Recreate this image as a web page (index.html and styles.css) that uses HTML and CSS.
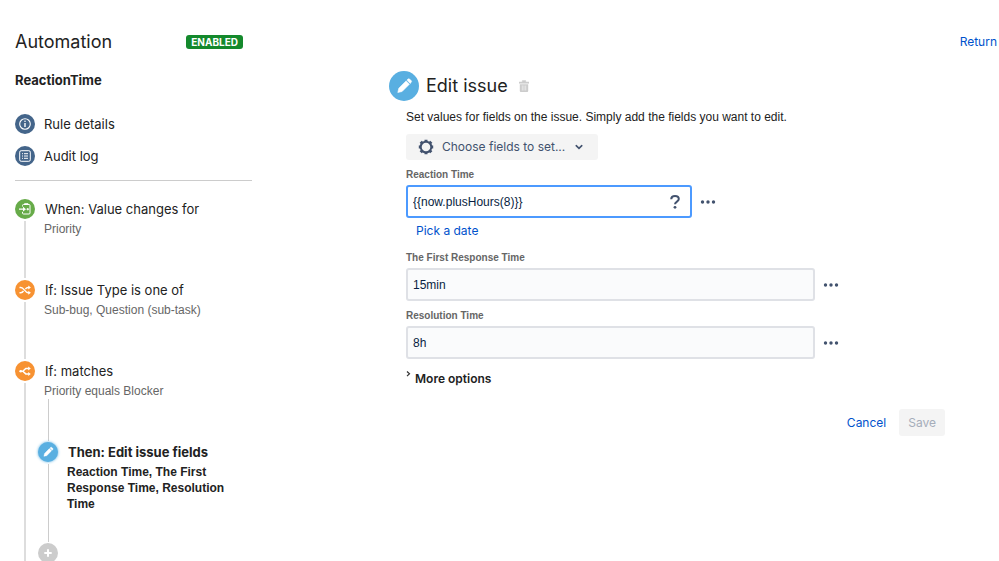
FILE: index.html
```html
<!DOCTYPE html>
<html lang="en">
<head>
<meta charset="utf-8">
<title>Automation</title>
<link rel="stylesheet" href="styles.css">
</head>
<body>
<svg class="defs" aria-hidden="true">
  <symbol id="pencil" viewBox="0 0 30 30">
    <path fill="#fff" stroke="#fff" stroke-width=".6" stroke-linejoin="round" d="M9.800 17.200l7.300-7.300 3.300 3.300-7.300 7.300-4.300 1zM17.900 9.100l.9-.9a1.400 1.400 0 0 1 2 0l1.300 1.300a1.400 1.400 0 0 1 0 2l-.9.900z"/>
  </symbol>
</svg>
<div class="page">
  <aside class="sidebar">
    <header class="brand">
      <h1>Automation</h1>
      <span class="badge">ENABLED</span>
    </header>
    <h2 class="rule-name">ReactionTime</h2>
    <nav class="rule-nav">
      <a href="#details">
        <svg class="dot navy" viewBox="0 0 20 20"><circle cx="10" cy="10" r="5.300" fill="none" stroke="#fff" stroke-width="1.100"/><path d="M10 9v4" stroke="#fff" stroke-width="1.400"/><circle cx="10" cy="7.300" r=".8" fill="#fff"/></svg>
        Rule details
      </a>
      <a href="#audit">
        <svg class="dot navy" viewBox="0 0 20 20"><rect x="4.700" y="4.700" width="10.600" height="10.600" rx="1.500" fill="none" stroke="#fff"/><path d="M7 7.700h1M9 7.700h4M7 10h1M9 10h4M7 12.300h1M9 12.300h4" stroke="#fff"/></svg>
        Audit log
      </a>
    </nav>
    <ol class="steps">
      <li class="step">
        <div class="rail">
          <svg class="dot green" viewBox="0 0 20 20"><path d="M7.500 7.500v-1a1 1 0 0 1 1-1h5.500a1 1 0 0 1 1 1V14a1 1 0 0 1-1 1H8.500a1 1 0 0 1-1-1v-1.200M9.500 5.500V4.700h3.500v.8" fill="none" stroke="#fff"/><path d="M4 10.200h5" stroke="#fff" stroke-width="1.300"/><path d="M8 7.800l3 2.400-3 2.400z" fill="#fff"/><path d="M11.500 10.200h2.500M12.750 9v2.400" stroke="#fff"/></svg>
        </div>
        <div class="step-body">
          <h3>When: Value changes for</h3>
          <p>Priority</p>
        </div>
      </li>
      <li class="step">
        <div class="rail">
          <svg class="dot orange" viewBox="0 0 20 20"><path d="M4.500 7.500h1.300c3.200 0 4.200 5.200 7.400 5.200h.8M4.500 12.700h1.300c1.200 0 2.100-.8 2.700-1.700M10.400 9.200c.7-1 1.500-1.700 2.800-1.700h.8" fill="none" stroke="#fff" stroke-width="1.400"/><path d="M13.300 5.500l2.600 2-2.600 2zM13.300 10.700l2.600 2-2.600 2z" fill="#fff"/></svg>
        </div>
        <div class="step-body">
          <h3>If: Issue Type is one of</h3>
          <p>Sub-bug, Question (sub-task)</p>
        </div>
      </li>
      <li class="step">
        <div class="rail">
          <svg class="dot orange" viewBox="0 0 20 20"><path d="M4.500 10.200h3.300l3-2.700h3M7.800 10.200l3 2.700h3" fill="none" stroke="#fff" stroke-width="1.500"/><circle cx="5.800" cy="10.200" r="1.200" fill="#fff"/><path d="M13.200 5.500l2.600 2-2.600 2zM13.200 10.900l2.600 2-2.600 2z" fill="#fff"/></svg>
        </div>
        <div class="step-body">
          <h3>If: matches</h3>
          <p>Priority equals Blocker</p>
          <ol class="steps nested">
            <li class="step current">
              <div class="rail">
                <svg class="dot blue"><use href="#pencil"/></svg>
              </div>
              <div class="step-body">
                <h3>Then: Edit issue fields</h3>
                <p>Reaction Time, The First Response Time, Resolution Time</p>
              </div>
            </li>
          </ol>
          <button class="add" type="button" aria-label="Add component"><svg viewBox="0 0 20 20"><path d="M10 6.300v7.400M6.300 10h7.400" stroke="#fff" stroke-width="2"/></svg></button>
        </div>
      </li>
    </ol>
  </aside>

  <main class="main">
    <div class="topbar"><a href="#return">Return</a></div>
    <form class="editor">
      <header class="editor-head">
        <svg class="dot large blue"><use href="#pencil"/></svg>
        <h2>Edit issue</h2>
        <button class="icon-button" type="button" aria-label="Delete"><svg class="trash" viewBox="0 0 10 12"><path d="M0 2h10v1.300H0zM3.300 2V.6h3.400V2" fill="#ccc" stroke="#ccc" stroke-width=".5"/><path d="M.8 4.200h8.400V11a1 1 0 0 1-1 1H1.800a1 1 0 0 1-1-1z" fill="#ccc"/><path d="M3.300 5.500v5M5 5.500v5M6.700 5.500v5" stroke="#eee" stroke-width=".8"/></svg></button>
      </header>
      <div class="editor-body">
        <p class="intro">Set values for fields on the issue. Simply add the fields you want to edit.</p>
        <button class="choose" type="button">
          <svg class="gear" viewBox="0 0 16 16"><circle cx="8" cy="8" r="5.300" fill="none" stroke="#42526e" stroke-width="2"/><g stroke="#42526e" stroke-width="3"><path d="M8 .8v2M8 13.200v2M.8 8h2M13.200 8h2M2.700 2.700l1.400 1.400M11.900 11.900l1.400 1.400M2.700 13.300l1.400-1.400M11.900 4.100l1.400-1.400"/></g></svg>
          Choose fields to set...
          <svg class="chevron" viewBox="0 0 8 8"><path d="M1.200 2.700L4 5.400l2.800-2.700" fill="none" stroke="#42526e" stroke-width="1.600" stroke-linecap="round"/></svg>
        </button>

        <div class="field">
          <label for="reaction">Reaction Time</label>
          <div class="row short">
            <div class="box focused">
              <input id="reaction" type="text" value="{{now.plusHours(8)}}">
              <button class="help" type="button" aria-label="Help"><svg viewBox="0 0 10 14"><path d="M1.200 4.200C1.300 2.200 2.800 1 5 1s3.800 1.200 3.800 3.100C8.800 6.700 5 6.500 5 9.300" fill="none" stroke="#42526e" stroke-width="2"/><circle cx="5" cy="12.300" r="1.400" fill="#42526e"/></svg></button>
            </div>
            <button class="more" type="button" aria-label="More"><svg viewBox="0 0 16 4"><g fill="#42526e"><circle cx="2.500" cy="2" r="1.700"/><circle cx="8" cy="2" r="1.700"/><circle cx="13.500" cy="2" r="1.700"/></g></svg></button>
          </div>
          <a class="pick" href="#date">Pick a date</a>
        </div>

        <div class="field">
          <label for="first">The First Response Time</label>
          <div class="row">
            <div class="box"><input id="first" type="text" value="15min"></div>
            <button class="more" type="button" aria-label="More"><svg viewBox="0 0 16 4"><g fill="#42526e"><circle cx="2.500" cy="2" r="1.700"/><circle cx="8" cy="2" r="1.700"/><circle cx="13.500" cy="2" r="1.700"/></g></svg></button>
          </div>
        </div>

        <div class="field">
          <label for="resolution">Resolution Time</label>
          <div class="row">
            <div class="box"><input id="resolution" type="text" value="8h"></div>
            <button class="more" type="button" aria-label="More"><svg viewBox="0 0 16 4"><g fill="#42526e"><circle cx="2.500" cy="2" r="1.700"/><circle cx="8" cy="2" r="1.700"/><circle cx="13.500" cy="2" r="1.700"/></g></svg></button>
          </div>
        </div>

        <button class="options" type="button"><svg viewBox="0 0 5 8"><path d="M1 .5l2.500 2.300L1 5.100" fill="none" stroke="#333" stroke-width="1.200"/></svg>More options</button>

        <div class="actions">
          <a href="#cancel">Cancel</a>
          <button class="save" type="submit" disabled>Save</button>
        </div>
      </div>
    </form>
  </main>
</div>
</body>
</html>
```
FILE: styles.css
```css
* { box-sizing: border-box; }
body {
  margin: 0;
  height: 100vh;
  overflow: hidden;
  background: #fff;
  color: #222;
  font: 13px/16px "Inter", sans-serif;
}
h1, h2, h3, p, ol { margin: 0; padding: 0; }
ol { list-style: none; }
a { color: #0052cc; text-decoration: none; }
button {
  border: 0;
  padding: 0;
  background: none;
  color: inherit;
  font: inherit;
}
svg { display: block; flex: none; }
.defs { position: absolute; width: 0; height: 0; }

.page {
  display: grid;
  grid-template-columns: 252px 1fr;
  min-height: 100vh;
}
.sidebar {
  display: flex;
  flex-direction: column;
  padding: 30px 0 0 15px;
}
.brand {
  display: flex;
  align-items: center;
  justify-content: space-between;
  padding-right: 9px;
}
h1 { font-size: 18px; line-height: 24px; font-weight: 400; }
.badge {
  padding: 0 5px;
  border-radius: 3px;
  background: #14892c;
  color: #fff;
  font: bold 10px/14px "Inter", sans-serif;
}
.rule-name {
  margin-top: 18px;
  font-size: 13px;
  line-height: 16px;
  font-weight: 700;
}
.rule-nav {
  display: flex;
  flex-direction: column;
  gap: 12px;
  margin-top: 26px;
  padding-bottom: 14px;
  border-bottom: 1px solid #ccc;
}
.rule-nav a {
  display: flex;
  align-items: center;
  gap: 9px;
  color: #222;
}

.dot { width: 20px; height: 20px; border-radius: 50%; }
.dot.large { width: 30px; height: 30px; }
.navy { background: #44658a; }
.green { background: #67ab49; }
.orange { background: #f79232; }
.blue { background: #59afe1; }

.steps { flex: 1; display: flex; flex-direction: column; margin-top: 18px; }
.step { display: flex; gap: 3px; min-height: 81px; }
.step:last-child { flex: 1; }
.rail {
  display: flex;
  flex-direction: column;
  align-items: center;
  gap: 2px;
  width: 20px;
}
.rail::after {
  content: "";
  flex: 1;
  width: 2px;
  margin-bottom: 2px;
  background: #ddd;
}
.step-body { flex: 1; }
.step-body h3 {
  padding-left: 7px;
  font-size: 13px;
  line-height: 20px;
  font-weight: 400;
}
.step-body p {
  padding: 2px 20px 0 6px;
  color: #666;
  font: 12px/16px "Liberation Sans", Arial, sans-serif;
}
.nested { margin-top: 0; }
.nested::before {
  content: "";
  width: 1px;
  height: 42px;
  margin: 0 0 1px 10px;
  background: #ccc;
}
.nested .step { min-height: 101px; }
.nested .rail::after { width: 1px; margin-bottom: 1px; background: #ccc; }
.nested .dot { box-shadow: 0 0 3px #59afe1; }
.step-body .current h3 { font-weight: 700; }
.step-body .current p { color: #222; font-weight: 700; }
.add { display: block; border-radius: 50%; background: #ccc; }
.add svg { width: 20px; height: 20px; }

.main { padding: 34px 2px 0 137px; }
.topbar { display: flex; justify-content: flex-end; font-size: 12px; }
.editor { margin-right: 52px; padding-top: 21px; }
.editor-head { display: flex; align-items: center; gap: 7px; }
.editor-head h2 { font-size: 18px; line-height: 24px; font-weight: 400; }
.icon-button { margin-left: 4px; }
.trash { width: 10px; height: 12px; }
.editor-body {
  display: flex;
  flex-direction: column;
  align-items: flex-start;
  padding-left: 17px;
}
.intro { margin-top: 8px; font: 12px/16px "Liberation Sans", Arial, sans-serif; }
.choose {
  display: flex;
  align-items: center;
  gap: 8px;
  height: 26px;
  margin-top: 9px;
  padding: 0 15px 0 12px;
  border-radius: 3px;
  background: #f4f4f4;
  color: #42526e;
  font-size: 12px;
}
.gear { width: 16px; height: 16px; }
.chevron { width: 8px; height: 8px; margin-left: 2px; }
.field { width: 100%; margin-top: 8px; }
.field label {
  display: block;
  margin-bottom: 3px;
  color: #666;
  font: bold 10px/14px "Liberation Sans", Arial, sans-serif;
}
.row { display: flex; align-items: center; gap: 8px; margin-right: 106px; }
.row.short { margin-right: 229px; }
.box {
  flex: 1;
  display: flex;
  align-items: center;
  height: 33px;
  border: 2px solid #dfe1e6;
  border-radius: 3px;
  background: #fafbfc;
}
.box.focused { border-color: #4c9aff; background: #fff; }
.box input {
  flex: 1;
  min-width: 0;
  padding: 0 5px;
  border: 0;
  outline: 0;
  background: none;
  color: #091e42;
  font: 12px/16px "Liberation Sans", Arial, sans-serif;
}
.help { margin-right: 10px; }
.help svg { width: 10px; height: 14px; }
.more svg { width: 16px; height: 4px; }
.pick { display: block; margin: 5px 0 4px 10px; font-size: 12px; }
.options {
  display: flex;
  gap: 4px;
  margin-top: 12px;
  font-size: 12px;
  font-weight: 600;
}
.options svg { width: 5px; height: 8px; }
.actions {
  display: flex;
  align-items: center;
  align-self: flex-end;
  gap: 13px;
  margin-top: 22px;
  font-size: 12px;
}
.save {
  height: 27px;
  padding: 0 9px;
  border-radius: 3px;
  background: #f4f4f4;
  color: #a5adba;
}
```
